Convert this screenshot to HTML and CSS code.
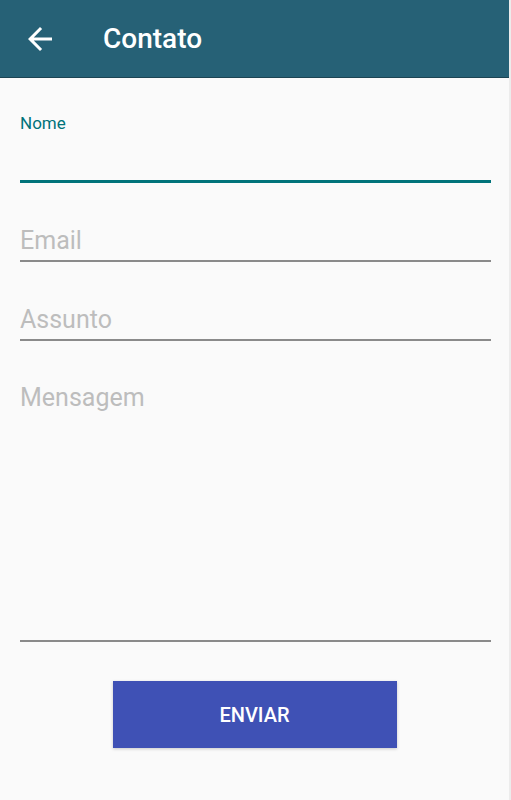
FILE: index.html
```html
<!DOCTYPE html>
<html lang="pt-BR">
<head>
  <meta charset="UTF-8">
  <meta name="viewport" content="width=device-width, initial-scale=1.0">
  <title>Contato</title>
  <link rel="stylesheet" href="styles.css">
</head>
<body>
  <div class="screen">
    <div class="toolbar">
      <a class="back" href="#">
        <svg width="36" height="36" viewBox="0 0 24 24">
          <path fill="#fff" d="M20 11H7.83l5.59-5.59L12 4l-8 8 8 8 1.41-1.41L7.83 13H20v-2z"/>
        </svg>
      </a>
      <h1 class="title">Contato</h1>
    </div>

    <form class="contact-form">
      <div class="field field-active">
        <label for="nome">Nome</label>
        <input type="text" id="nome">
      </div>
      <div class="field">
        <input type="email" id="email" placeholder="Email">
      </div>
      <div class="field">
        <input type="text" id="assunto" placeholder="Assunto">
      </div>
      <div class="field">
        <textarea id="mensagem" placeholder="Mensagem"></textarea>
      </div>
      <div class="actions">
        <button type="submit" class="btn-send">ENVIAR</button>
      </div>
    </form>
  </div>
</body>
</html>
```

FILE: styles.css
```css
body {
  margin: 0;
  background: #fafafa;
  font-family: Roboto, "Noto Sans", sans-serif;
}
.screen {
  min-height: 800px;
  box-sizing: border-box;
  border-right: 2px solid #ececec;
}
.toolbar {
  height: 77px;
  display: flex;
  align-items: center;
  background: #266176;
  border-bottom: 1px solid #1c4453;
}
.back {
  display: flex;
  margin-left: 22px;
}
.title {
  margin: 0 0 0 45px;
  color: #fff;
  font-size: 28px;
  font-weight: 500;
}
.contact-form {
  padding: 35px 18px 0 20px;
}
.field {
  margin-bottom: 38px;
}
.field label {
  display: block;
  font-size: 17px;
  line-height: 20px;
  color: #00737a;
}
.field input, .field textarea {
  display: block;
  width: 100%;
  box-sizing: border-box;
  margin: 0;
  padding: 0;
  border: none;
  border-bottom: 2px solid #8a8a8a;
  background: transparent;
  font-family: Roboto, "Noto Sans", sans-serif;
  font-size: 25px;
  color: #212121;
  outline: none;
}
.field input {
  height: 41px;
}
.field-active input {
  height: 50px;
  border-bottom: 3px solid #00737a;
}
.field textarea {
  height: 263px;
  padding-top: 4px;
  line-height: 30px;
  resize: none;
}
.field input::placeholder, .field textarea::placeholder {
  color: #bdbdbd;
}
.actions {
  display: flex;
  justify-content: center;
  padding: 1px 2px 0 0;
}
.btn-send {
  width: 284px;
  height: 67px;
  border: none;
  background: #3f51b5;
  color: #fff;
  font-family: Roboto, "Noto Sans", sans-serif;
  font-size: 20px;
  font-weight: 500;
  box-shadow: 0 1px 3px rgba(0,0,0,0.2);
}
```
